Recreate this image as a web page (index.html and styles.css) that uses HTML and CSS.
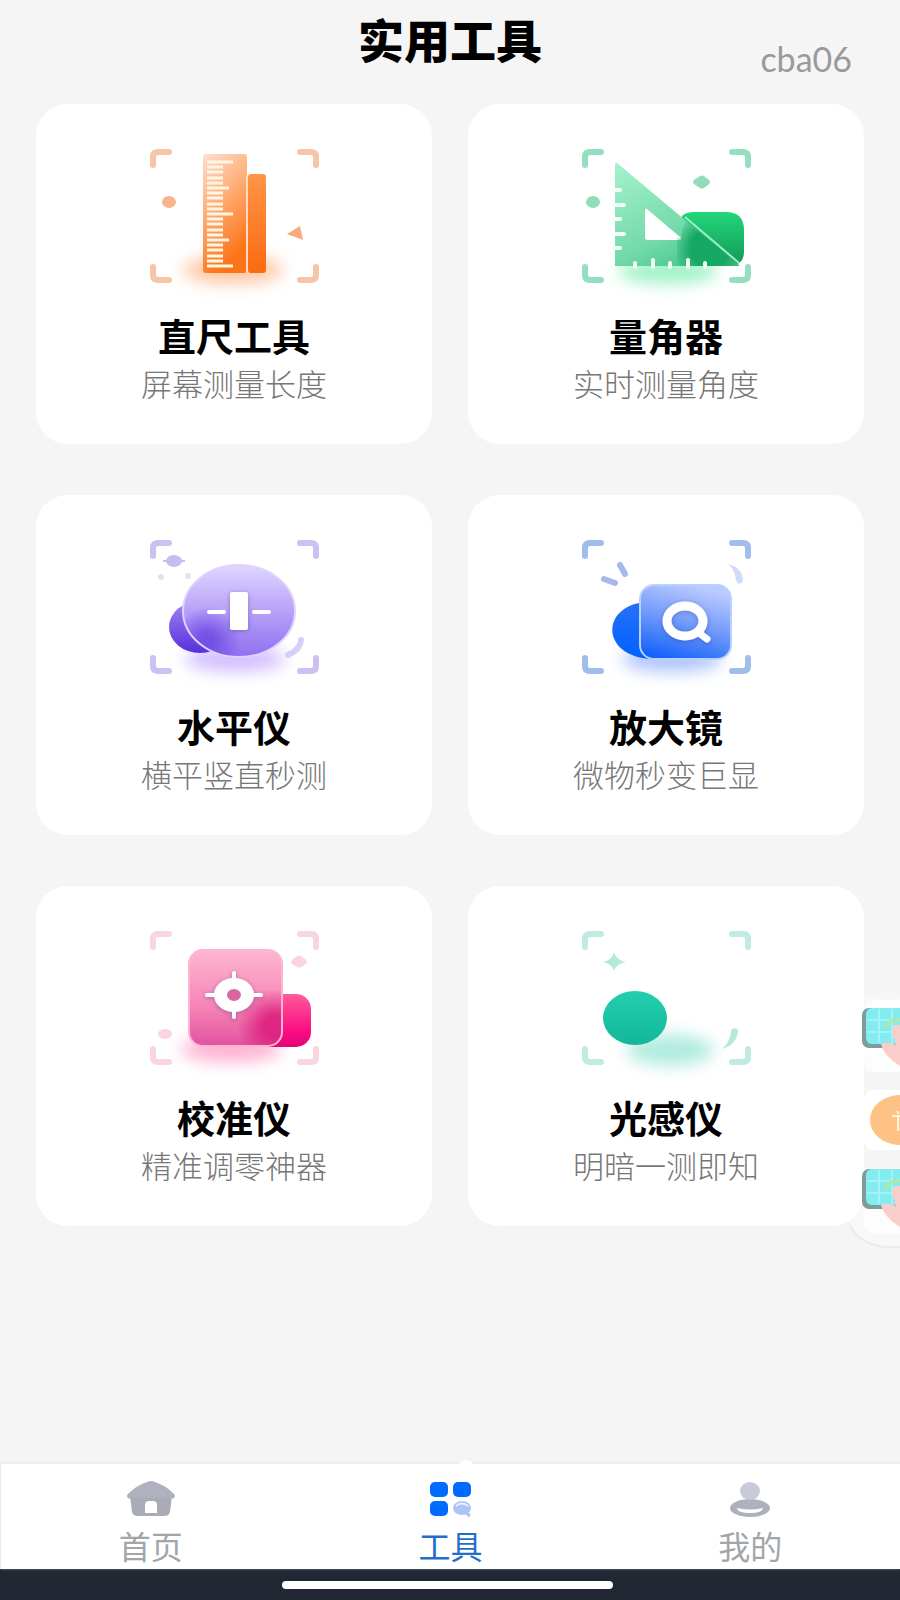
FILE: index.html
```html
<!DOCTYPE html>
<html lang="zh-CN">
<head>
<meta charset="utf-8">
<meta name="viewport" content="width=device-width, initial-scale=1">
<title>实用工具</title>
<link rel="stylesheet" href="styles.css">
</head>
<body>
<svg class="defs" aria-hidden="true">
  <defs>
    <symbol id="frame" viewBox="0 0 210 170">
      <path d="M24 35V27q0-5 5-5h11M171 22h11q5 0 5 5v8M187 137v8q0 5-5 5h-11M40 150H29q-5 0-5-5v-8" fill="none" stroke="currentColor" stroke-width="6" stroke-linecap="round"/>
    </symbol>
    <filter id="blur" x="-50%" y="-100%" width="200%" height="300%"><feGaussianBlur stdDeviation="8"/></filter>
    <filter id="shade" x="-30%" y="-30%" width="160%" height="160%"><feDropShadow dx="0" dy="1" stdDeviation="2" flood-color="#303080" flood-opacity=".4"/></filter>
    <linearGradient id="o1" x1="0" y1="0" x2=".35" y2="1"><stop stop-color="#fde0d0"/><stop offset=".45" stop-color="#ffaf78"/><stop offset="1" stop-color="#fd7418"/></linearGradient>
    <linearGradient id="o2" x1="0" y1="0" x2="0" y2="1"><stop stop-color="#ff9548"/><stop offset="1" stop-color="#fb6a10"/></linearGradient>
    <linearGradient id="g1" x1="0" y1="0" x2=".6" y2="1"><stop stop-color="#a5f2cc"/><stop offset=".7" stop-color="#74d9aa"/><stop offset="1" stop-color="#48c98d"/></linearGradient>
    <linearGradient id="g2" x1="0" y1="0" x2="0" y2="1"><stop stop-color="#22d77a"/><stop offset="1" stop-color="#139858"/></linearGradient>
    <radialGradient id="g3" gradientUnits="userSpaceOnUse" cx="150" cy="118" r="38"><stop offset=".5" stop-color="#16a863"/><stop offset="1" stop-color="#16a863" stop-opacity="0"/></radialGradient>
    <linearGradient id="p1" x1="0" y1="0" x2="0" y2="1"><stop stop-color="#e0d6ff"/><stop offset=".5" stop-color="#b7a1f8"/><stop offset="1" stop-color="#8f70f0"/></linearGradient>
    <linearGradient id="p2" x1="0" y1="0" x2="0" y2="1"><stop stop-color="#a184f2"/><stop offset="1" stop-color="#5630da"/></linearGradient>
    <radialGradient id="p3" gradientUnits="userSpaceOnUse" cx="78" cy="116" r="34"><stop offset=".2" stop-color="#6a45e2" stop-opacity=".8"/><stop offset="1" stop-color="#6a45e2" stop-opacity="0"/></radialGradient>
    <linearGradient id="b1" x1=".6" y1="0" x2=".25" y2="1"><stop stop-color="#bccbff"/><stop offset=".5" stop-color="#6f99fa"/><stop offset="1" stop-color="#1261fa"/></linearGradient>
    <linearGradient id="b2" x1="0" y1="0" x2="0" y2="1"><stop stop-color="#2871f8"/><stop offset="1" stop-color="#0060ff"/></linearGradient>
    <linearGradient id="k1" x1="0" y1="0" x2="0" y2="1"><stop stop-color="#ffb7d1"/><stop offset=".6" stop-color="#f583b5"/><stop offset="1" stop-color="#e252a0"/></linearGradient>
    <linearGradient id="k2" x1="0" y1="0" x2="0" y2="1"><stop stop-color="#ff5c98"/><stop offset=".7" stop-color="#fa0c83"/><stop offset="1" stop-color="#e30478"/></linearGradient>
    <radialGradient id="k3" gradientUnits="userSpaceOnUse" cx="146" cy="112" r="38"><stop offset=".3" stop-color="#de1f7e" stop-opacity=".9"/><stop offset="1" stop-color="#de1f7e" stop-opacity="0"/></radialGradient>
    <linearGradient id="t1" x1="0" y1="0" x2="0" y2="1"><stop stop-color="#22cfae"/><stop offset="1" stop-color="#13b79b"/></linearGradient>
    <symbol id="keyboard" viewBox="0 0 60 70">
      <rect x="22" y="8" width="60" height="40" rx="7" fill="#7f9c9c"/>
      <rect x="26" y="8" width="60" height="36" rx="6" fill="#83ecf0"/>
      <path d="M39 9v34M52 9v34M27 20h33M27 32h33" stroke="#a2f3f4" stroke-width="2"/>
      <path d="M45 28q3-9 15-8" fill="none" stroke="#b2e9a0" stroke-width="3"/>
      <path d="M60 25q-9-2-8 7l4 13q-8-4-15-1 2 11 19 22z" fill="#f8cdca"/>
    </symbol>
  </defs>
</svg>

<header class="header">
  <h1 class="header-title">实用工具</h1>
  <span class="header-code">cba06</span>
</header>

<main class="main">
  <div class="grid">
    <a class="card" href="#ruler">
      <svg class="art art-orange" viewBox="0 0 210 170" aria-hidden="true">
        <use href="#frame"/>
        <ellipse cx="104" cy="140" rx="50" ry="14" fill="#ffb98c" opacity=".8" filter="url(#blur)"/>
        <rect x="119" y="44" width="18" height="99" rx="3" fill="url(#o2)"/>
        <rect x="74" y="24" width="44" height="119" rx="3" fill="url(#o1)"/>
        <path d="M118 46V143" stroke="#ffd9bd" stroke-width="2"/>
        <path d="M78 32h26M78 58h22M78 84h26M78 110h22M78 136h26M78 37h16M78 42h16M78 48h16M78 53h16M78 63h16M78 68h16M78 74h16M78 79h16M78 89h16M78 94h16M78 100h16M78 105h16M78 115h16M78 120h16M78 126h16M78 131h16" stroke="#fff5e4" stroke-width="3"/>
        <ellipse cx="40" cy="72" rx="7" ry="6" fill="#f8b48d"/>
        <path d="M158 104l13-8 3 14z" fill="#f8ab7e"/>
      </svg>
      <h2 class="card-title">直尺工具</h2>
      <p class="card-text">屏幕测量长度</p>
    </a>
    <a class="card" href="#protractor">
      <svg class="art art-green" viewBox="0 0 210 170" aria-hidden="true">
        <use href="#frame"/>
        <g transform="translate(-1 0)">
          <ellipse cx="108" cy="141" rx="50" ry="13" fill="#8ff0be" opacity=".85" filter="url(#blur)"/>
          <path d="M122 86q4-4 12-4h32q18 0 18 18v21q0 9-5 12l-3 2h-54z" fill="url(#g2)"/>
          <path d="M57 33l123 103H55V35q0-3 2-2zM87 79q-2-1-2 2v26q0 3 3 3h31q4 0 1-3z" fill="url(#g1)" fill-rule="evenodd"/>
          <path d="M125 90l55 46h-63V108h4q2-1 0-3z" fill="url(#g3)"/>
          <path d="M125 87l54 46" stroke="#a0f0c7" stroke-width="2"/>
          <path d="M54 60h6M54 75h10M54 89h6M54 104h10M54 118h6M75 137v-4M93 137v-7M110 137v-4M128 137v-7M145 137v-4" stroke="#f0fff7" stroke-width="4" stroke-linecap="round"/>
          <ellipse cx="33" cy="72" rx="7" ry="6" fill="#91dcb9"/>
          <path d="M134 50l6-4q2-1 4 0l5 4q2 2 0 4l-5 4q-2 1-4 0l-6-4q-2-2 0-4z" fill="#91dcb9"/>
        </g>
      </svg>
      <h2 class="card-title">量角器</h2>
      <p class="card-text">实时测量角度</p>
    </a>
    <a class="card" href="#level">
      <svg class="art art-purple" viewBox="0 0 210 170" aria-hidden="true">
        <use href="#frame"/>
        <g transform="translate(0 4)">
          <ellipse cx="106" cy="134" rx="50" ry="13" fill="#cab4ff" opacity=".85" filter="url(#blur)"/>
          <ellipse cx="71" cy="102" rx="31" ry="26" fill="url(#p2)"/>
          <ellipse cx="110" cy="86" rx="56" ry="46" fill="url(#p1)"/>
          <ellipse cx="110" cy="86" rx="56" ry="46" fill="url(#p3)" stroke="#ded2ff" stroke-width="2"/>
          <g filter="url(#shade)"><rect x="101" y="67" width="18" height="38" rx="2" fill="#fff"/></g>
          <path d="M80 87h15M125 87h15" stroke="#fff" stroke-width="4" stroke-linecap="round"/>
          <path d="M34 36h22" stroke="#c8bcef" stroke-width="2"/>
          <ellipse cx="45" cy="36" rx="8" ry="6" fill="#c8bcef"/>
          <circle cx="32" cy="52" r="3" fill="#e5e3e8"/><circle cx="59" cy="51" r="3" fill="#e5e3e8"/>
          <path d="M172 115q-1 10-13 15" fill="none" stroke="#d7cff7" stroke-width="6" stroke-linecap="round"/>
        </g>
      </svg>
      <h2 class="card-title">水平仪</h2>
      <p class="card-text">横平竖直秒测</p>
    </a>
    <a class="card" href="#magnifier">
      <svg class="art art-blue" viewBox="0 0 210 170" aria-hidden="true">
        <use href="#frame"/>
        <g transform="translate(-1 4)">
          <ellipse cx="112" cy="134" rx="50" ry="13" fill="#a5bdff" opacity=".9" filter="url(#blur)"/>
          <path d="M92 77C40 76 38 132 92 134z" fill="url(#b2)"/>
          <rect x="80" y="60" width="91" height="74" rx="14" fill="url(#b1)" stroke="#b7d2ff" stroke-width="2"/>
          <g filter="url(#shade)" fill="none" stroke="#fff"><ellipse cx="125" cy="96" rx="18" ry="15" stroke-width="9"/><path d="M139 108l8 6" stroke-width="7" stroke-linecap="round"/></g>
          <path d="M44 54l11 4M60 40l5 9" stroke="#a9b8ec" stroke-width="6" stroke-linecap="round"/>
          <path d="M168 39q15 4 15 17-4 6-7-1-1-10-8-16z" fill="#d1dafa"/>
        </g>
      </svg>
      <h2 class="card-title">放大镜</h2>
      <p class="card-text">微物秒变巨显</p>
    </a>
    <a class="card" href="#calibrate">
      <svg class="art art-pink" viewBox="0 0 210 170" aria-hidden="true">
        <use href="#frame"/>
        <g transform="translate(0 3)">
          <ellipse cx="102" cy="134" rx="50" ry="13" fill="#ff9dc6" opacity=".8" filter="url(#blur)"/>
          <rect x="112" y="79" width="70" height="53" rx="15" fill="url(#k2)"/>
          <rect x="60" y="35" width="93" height="96" rx="14" fill="url(#k1)"/>
          <rect x="60" y="35" width="93" height="96" rx="14" fill="url(#k3)" stroke="#ffb4d3" stroke-width="2"/>
          <g filter="url(#shade)"><ellipse cx="105" cy="80" rx="20" ry="17" fill="#fff"/><path d="M78 80h54M105 58v44" stroke="#fff" stroke-width="4" stroke-linecap="round"/></g>
          <ellipse cx="105" cy="80" rx="7" ry="6" fill="#d9679f"/>
          <path d="M163 45l5-4q2-1 4 0l5 4q2 2 0 4l-5 3q-2 1-4 0l-5-3q-2-2 0-4z" fill="#fad5e1"/>
          <ellipse cx="36" cy="119" rx="7" ry="5" fill="#fad5e1"/>
        </g>
      </svg>
      <h2 class="card-title">校准仪</h2>
      <p class="card-text">精准调零神器</p>
    </a>
    <a class="card" href="#light">
      <svg class="art art-teal" viewBox="0 0 210 170" aria-hidden="true">
        <use href="#frame"/>
        <g transform="translate(-1 3)">
          <ellipse cx="110" cy="135" rx="44" ry="16" fill="#b2ecdf" filter="url(#blur)"/>
          <ellipse cx="75" cy="103" rx="32" ry="27" fill="url(#t1)"/>
          <path d="M54 37q2 8 12 10-10 2-12 9-2-7-11-9 9-2 11-10z" fill="#b5e9dc"/>
          <path d="M171 115q4-4 7 0 0 14-16 19 9-8 9-19z" fill="#b5e9dc"/>
        </g>
      </svg>
      <h2 class="card-title">光感仪</h2>
      <p class="card-text">明暗一测即知</p>
    </a>
  </div>
</main>

<svg class="float" viewBox="0 0 60 270" aria-hidden="true">
  <path d="M25 8Q60-4 60 10V257Q22 262 10 232L25 214z" fill="#f8f8f8"/>
  <path d="M10 236q14 24 50 21" fill="none" stroke="#ebebeb" stroke-width="2"/>
  <rect x="24" y="10" width="50" height="72" rx="10" fill="#fff" opacity=".75"/>
  <rect x="24" y="100" width="50" height="60" rx="10" fill="#fff"/>
  <rect x="24" y="178" width="50" height="66" rx="10" fill="#fff" opacity=".75"/>
  <path d="M25 82h35v18H25zM25 160h35v18H25z" fill="#f5f5f5"/>
  <use href="#keyboard" x="0" y="10" width="60" height="70"/>
  <ellipse cx="60" cy="130" rx="30" ry="25" fill="#fdc284"/>
  <path d="M52 126h8M57 121l2 3M58 127v14" fill="none" stroke="#fff3d8" stroke-width="2"/>
  <use href="#keyboard" x="0" y="171" width="60" height="70"/>
</svg>

<nav class="tabs">
  <a class="tab" href="#home">
    <svg class="tab-icon" viewBox="0 0 56 40" aria-hidden="true">
      <path d="M7 16h42l-2 17q-1 4-6 4H15q-5 0-6-4z" fill="#a9abb7"/>
      <path d="M24 3q4-2 8 0 10 3 19 12 2 2 0 4-2 1-5 0H10q-3 1-5 0-2-2 0-4 9-9 19-12z" fill="#b0b1c0"/>
      <path d="M22 34v-8q0-4 4-4h4q4 0 4 4v8z" fill="#fff"/>
    </svg>
    <span>首页</span>
  </a>
  <a class="tab tab-active" href="#tools" aria-current="page">
    <svg class="tab-icon" viewBox="0 0 56 40" aria-hidden="true">
      <g fill="#006bff"><rect x="8" y="3" width="18" height="15" rx="5"/><rect x="31" y="3" width="18" height="15" rx="5"/><rect x="8" y="22" width="18" height="15" rx="5"/></g>
      <ellipse cx="40" cy="29" rx="9" ry="7" fill="#abc4f4"/><path d="M43 33l5 4" stroke="#abc4f4" stroke-width="3"/><path d="M34 27q6-5 12 0" fill="none" stroke="#e9f2ff" stroke-width="2"/>
    </svg>
    <span>工具</span>
  </a>
  <a class="tab" href="#me">
    <svg class="tab-icon" viewBox="0 0 56 40" aria-hidden="true">
      <ellipse cx="28" cy="29" rx="20" ry="9" fill="#aeb0bc"/>
      <path d="M15 29q13 3 26 0 0 5-13 5t-13-5z" fill="#fff"/>
      <ellipse cx="28" cy="12" rx="10" ry="9" fill="#c8cada"/>
    </svg>
    <span>我的</span>
  </a>
</nav>
<div class="system"><div class="system-handle"></div></div>
</body>
</html>
```

FILE: styles.css
```css
* {
  box-sizing: border-box;
}

body {
  position: relative;
  display: flex;
  flex-direction: column;
  min-height: 100vh;
  margin: 0;
  background: #f5f5f5;
  color: #000;
  font-family: "Noto Sans CJK SC", sans-serif;
  overflow-x: hidden;
}

h1,
h2,
p {
  margin: 0;
}

a {
  color: inherit;
  text-decoration: none;
}

.defs {
  position: absolute;
  width: 0;
  height: 0;
}

.header {
  display: grid;
  grid-template-columns: 1fr auto 1fr;
  height: 104px;
  padding: 8px 48px 0 48px;
}

.header-title {
  grid-column: 2;
  font-size: 46px;
  line-height: 60px;
  font-weight: 900;
}

.header-code {
  justify-self: end;
  padding-top: 31px;
  color: #9a9a9a;
  font-family: Lato, sans-serif;
  font-size: 34px;
  line-height: 40px;
}

.main {
  flex: 1;
  padding: 0 36px 48px;
}

.grid {
  display: grid;
  grid-template-columns: 1fr 1fr;
  gap: 51px 36px;
}

.card {
  display: flex;
  flex-direction: column;
  align-items: center;
  padding: 26px 16px 43px;
  border-radius: 32px;
  background: #fff;
}

.art {
  display: block;
  width: 210px;
  height: 170px;
  margin-bottom: 12px;
}

.art-orange { color: #f6c5a6; }
.art-green { color: #93dfbf; }
.art-purple { color: #cdc1f2; }
.art-blue { color: #a0bdec; }
.art-pink { color: #f9d5df; }
.art-teal { color: #c0ebe2; }

.card-title {
  margin-bottom: 7px;
  font-size: 38px;
  line-height: 46px;
  font-weight: 700;
}

.card-text {
  color: #777;
  font-size: 31px;
  line-height: 36px;
  font-weight: 300;
}

.float {
  position: absolute;
  top: 990px;
  right: 0;
  width: 60px;
  height: 270px;
}

.tabs {
  position: relative;
  display: grid;
  grid-template-columns: repeat(3, 1fr);
  border-left: 1px solid #ececec;
  background: #fff;
  box-shadow: 0 -1px 3px #e6e6e6;
}

.tabs::before {
  content: "";
  position: absolute;
  top: -4px;
  left: 51%;
  width: 14px;
  height: 10px;
  border-radius: 50%;
  background: #fff;
}

.tab {
  display: flex;
  flex-direction: column;
  align-items: center;
  gap: 6px;
  padding: 15px 0 4px;
  color: #a2a6a8;
  font-size: 32px;
  line-height: 40px;
  font-weight: 400;
}

.tab-active {
  color: #1f6fc8;
}

.tab-icon {
  width: 56px;
  height: 40px;
}

.system {
  display: flex;
  justify-content: center;
  padding: 12px 5px 11px 0;
  background: #212834;
}

.system-handle {
  width: 37%;
  height: 8px;
  border-radius: 4px;
  background: #fff;
}
```
